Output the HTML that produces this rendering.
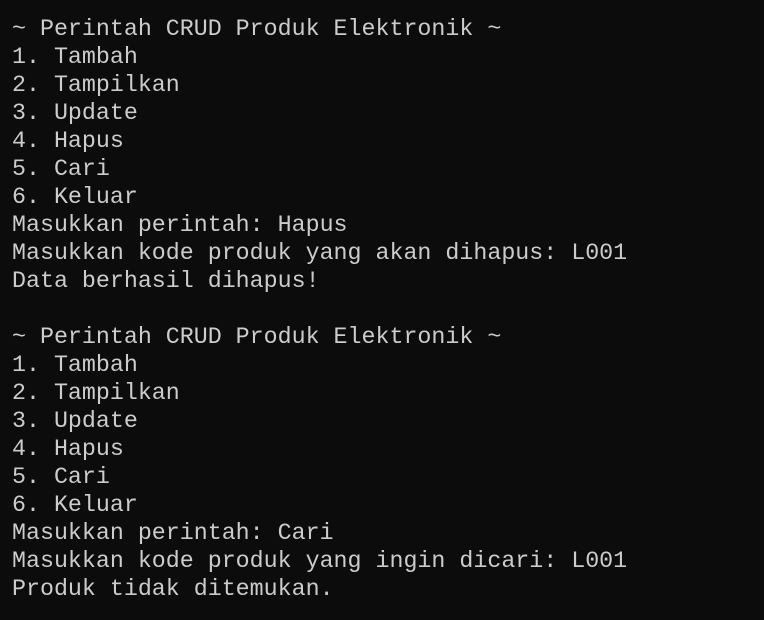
<!DOCTYPE html>
<html><head><meta charset="utf-8"><style>
html,body{margin:0;padding:0;background:#0c0c0c;width:764px;height:620px;overflow:hidden}
pre{margin:0;padding:15px 0 0 12px;font-family:"Liberation Mono","DejaVu Sans Mono",monospace;font-size:23.3px;line-height:28px;color:#cccccc;white-space:pre}
</style></head><body><pre>~ Perintah CRUD Produk Elektronik ~
1. Tambah
2. Tampilkan
3. Update
4. Hapus
5. Cari
6. Keluar
Masukkan perintah: Hapus
Masukkan kode produk yang akan dihapus: L001
Data berhasil dihapus!

~ Perintah CRUD Produk Elektronik ~
1. Tambah
2. Tampilkan
3. Update
4. Hapus
5. Cari
6. Keluar
Masukkan perintah: Cari
Masukkan kode produk yang ingin dicari: L001
Produk tidak ditemukan.</pre></body></html>
